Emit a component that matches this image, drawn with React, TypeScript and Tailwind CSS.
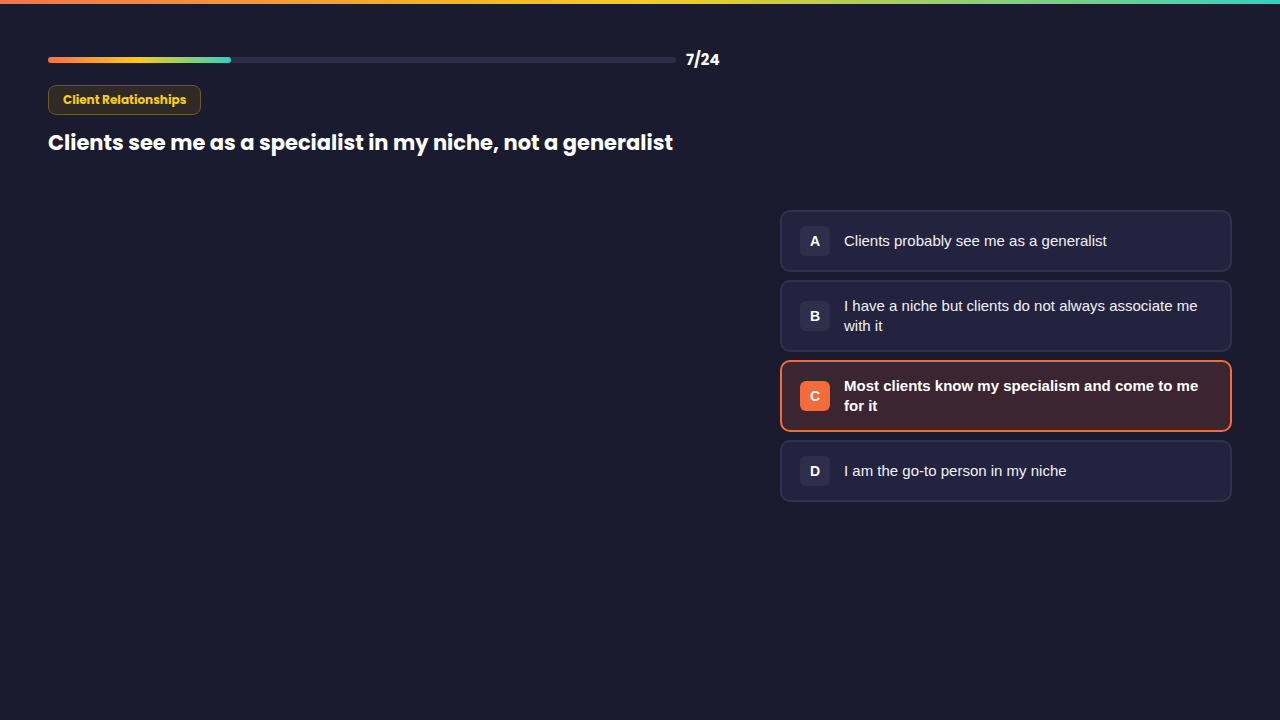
import React from "react";

const options = [
  { letter: "A", text: "Clients probably see me as a generalist" },
  { letter: "B", text: "I have a niche but clients do not always associate me with it" },
  { letter: "C", text: "Most clients know my specialism and come to me for it", selected: true },
  { letter: "D", text: "I am the go-to person in my niche" },
];

export default function App() {
  return (
    <div className="min-h-[720px] w-full bg-[#1b1b2f] text-white" style={{ fontFamily: "'Liberation Sans', Arial, sans-serif" }}>
      <div className="h-1 w-full bg-[linear-gradient(90deg,#f97142_0%,#facc15_50%,#2dd4bf_100%)]" />
      <div className="px-12 pt-[44px]">
        <div className="flex items-center gap-[10px]">
          <div className="h-[6px] w-[628px] rounded-full bg-[#2e2d4a]">
            <div className="h-[6px] w-[29.2%] rounded-full bg-[linear-gradient(90deg,#f97142_0%,#facc15_50%,#2dd4bf_100%)]" />
          </div>
          <span className="font-['Poppins','Inter',sans-serif] text-[15px] font-bold leading-[24px]">7/24</span>
        </div>
        <div className="mt-[13px] inline-flex h-[30px] items-center rounded-lg border border-[#6b5a22] bg-[#2f2a26] px-[14px] font-['Poppins','Inter',sans-serif] text-[12px] font-bold text-[#facc15]">
          Client Relationships
        </div>
        <h1 className="mt-[13px] font-['Poppins','Inter',sans-serif] text-[21px] font-bold leading-[30px]">
          Clients see me as a specialist in my niche, not a generalist
        </h1>
        <div className="mt-[52px] flex justify-end">
          <div className="flex w-[452px] flex-col gap-2">
            {options.map((o) =>
              o.selected ? (
                <div key={o.letter} className="flex items-center gap-[14px] rounded-[10px] border-2 border-[#f26b3a] bg-[#3a2530] px-[18px] py-[14px]">
                  <div className="flex h-[30px] w-[30px] shrink-0 items-center justify-center rounded-md bg-[#f26b3a] text-[14px] font-bold">{o.letter}</div>
                  <div className="text-[15px] font-bold leading-[20px]">{o.text}</div>
                </div>
              ) : (
                <div key={o.letter} className="flex items-center gap-[14px] rounded-[10px] border-2 border-[#31304d] bg-[#24233f] px-[18px] py-[14px]">
                  <div className="flex h-[30px] w-[30px] shrink-0 items-center justify-center rounded-md bg-[#2f2e4b] text-[14px] font-bold">{o.letter}</div>
                  <div className="text-[15px] leading-[20px] text-[#f1f1f5]">{o.text}</div>
                </div>
              )
            )}
          </div>
        </div>
      </div>
    </div>
  );
}
